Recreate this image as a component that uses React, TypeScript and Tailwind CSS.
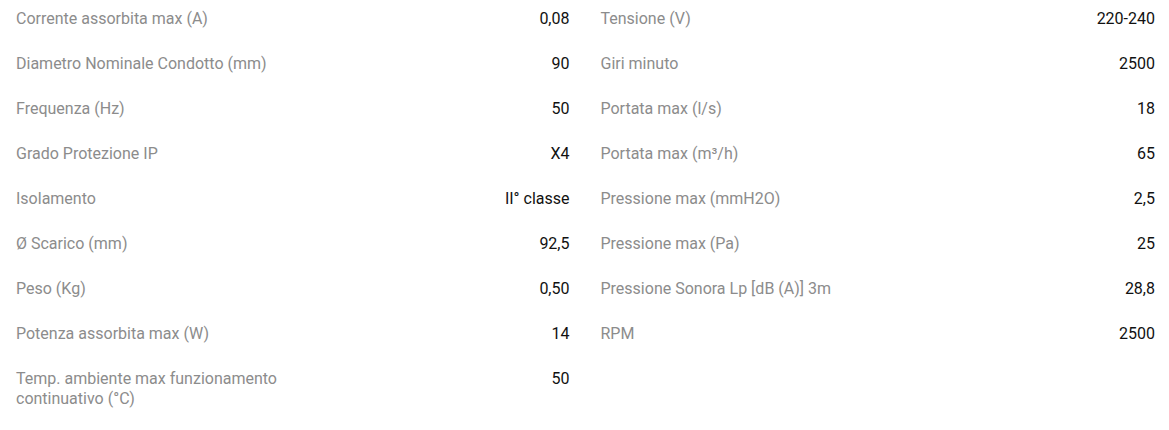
type Spec = { label: string; value: string };

const left: Spec[] = [
  { label: "Corrente assorbita max (A)", value: "0,08" },
  { label: "Diametro Nominale Condotto (mm)", value: "90" },
  { label: "Frequenza (Hz)", value: "50" },
  { label: "Grado Protezione IP", value: "X4" },
  { label: "Isolamento", value: "II° classe" },
  { label: "Ø Scarico (mm)", value: "92,5" },
  { label: "Peso (Kg)", value: "0,50" },
  { label: "Potenza assorbita max (W)", value: "14" },
  { label: "Temp. ambiente max funzionamento continuativo (°C)", value: "50" },
];

const right: Spec[] = [
  { label: "Tensione (V)", value: "220-240" },
  { label: "Giri minuto", value: "2500" },
  { label: "Portata max (l/s)", value: "18" },
  { label: "Portata max (m³/h)", value: "65" },
  { label: "Pressione max (mmH2O)", value: "2,5" },
  { label: "Pressione max (Pa)", value: "25" },
  { label: "Pressione Sonora Lp [dB (A)] 3m", value: "28,8" },
  { label: "RPM", value: "2500" },
];

const SpecRow = ({ label, value }: Spec) => (
  <div className="flex justify-between pt-[9px] pb-4">
    <span className="w-1/2 text-[#8c8c8c]">{label}</span>
    <span className="text-right text-[#111]">{value}</span>
  </div>
);

export default function App() {
  return (
    <div
      className="grid grid-cols-2 bg-white text-[16px] leading-[20px]"
      style={{ fontFamily: "Roboto, 'Liberation Sans', sans-serif" }}
    >
      <div className="pl-4 pr-[15px]">
        {left.map((s) => (
          <SpecRow key={s.label} {...s} />
        ))}
      </div>
      <div className="pl-4 pr-[14px]">
        {right.map((s) => (
          <SpecRow key={s.label} {...s} />
        ))}
      </div>
    </div>
  );
}
